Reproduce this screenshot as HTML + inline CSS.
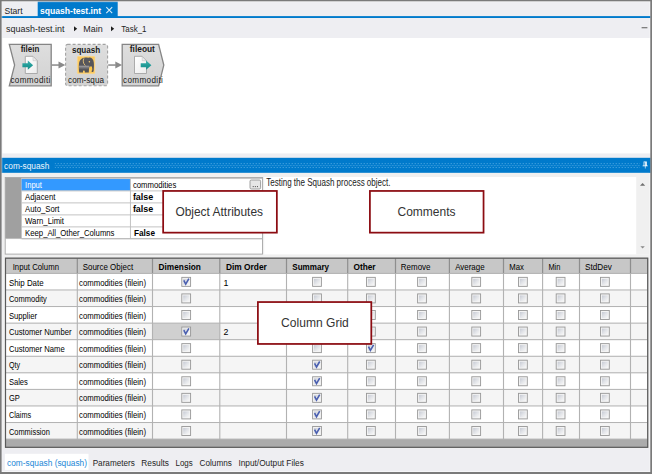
<!DOCTYPE html>
<html lang="en">
<head>
<meta charset="utf-8">
<title>squash-test.int</title>
<style>
html,body{margin:0;padding:0;background:#eeeef2;}
body{width:652px;height:474px;overflow:hidden;font-family:"Liberation Sans", sans-serif;}
svg{display:block;}
text{font-family:"Liberation Sans", sans-serif;white-space:pre;}
</style>
</head>
<body>
<svg width="652" height="474" viewBox="0 0 652 474" font-family='"Liberation Sans", sans-serif'>
<defs>
<linearGradient id="gbox" x1="0" y1="0" x2="0" y2="1"><stop offset="0" stop-color="#dedede"/><stop offset="1" stop-color="#d2d2d2"/></linearGradient>
<linearGradient id="gdoc" x1="0" y1="0" x2="1" y2="1"><stop offset="0" stop-color="#ffffff"/><stop offset="1" stop-color="#ececec"/></linearGradient>
<linearGradient id="geleph" x1="0" y1="0" x2="0" y2="1"><stop offset="0" stop-color="#a2a2a6"/><stop offset="0.5" stop-color="#707074"/><stop offset="1" stop-color="#4c4c50"/></linearGradient>
<linearGradient id="gteal" x1="0" y1="0" x2="0" y2="1"><stop offset="0" stop-color="#3fb1ad"/><stop offset="0.55" stop-color="#1f9a96"/><stop offset="1" stop-color="#1a8d8a"/></linearGradient>
<linearGradient id="gcb" x1="0" y1="0" x2="1" y2="1"><stop offset="0" stop-color="#c6cad4"/><stop offset="0.5" stop-color="#e2e4e8"/><stop offset="1" stop-color="#f8f8f8"/></linearGradient>
<pattern id="dots" x="54.7" y="163.1" width="3" height="4" patternUnits="userSpaceOnUse"><rect x="0" y="0" width="1" height="1" fill="#5eb0e6"/><rect x="1.5" y="2" width="1" height="1" fill="#5eb0e6"/></pattern>
</defs>
<rect x="0" y="0" width="652" height="474" fill="#eeeef2" />
<rect x="37.7" y="1.4" width="80" height="16" fill="#007acc" />
<rect x="1.4" y="16.1" width="649" height="1.9" fill="#007acc" />
<path d="M106.3 7.2 L112.2 13.2 M112.2 7.2 L106.3 13.2" stroke="#d6ebf8" stroke-width="1.1" fill="none"/>
<path d="M74 26.2 L77.2 28.7 L74 31.2 Z" fill="#1e1e1e"/>
<path d="M111 26.2 L114.2 28.7 L111 31.2 Z" fill="#1e1e1e"/>
<rect x="641.6" y="27.1" width="5.8" height="1.2" fill="#737373" />
<rect x="2.3" y="38" width="648.4" height="115.4" fill="#ffffff" />
<path d="M9.3 44.4 H51.2 V85.8 H9.3 L14.6 65.1 Z" fill="url(#gbox)" stroke="#858585" stroke-width="1.3" stroke-linejoin="miter"/>
<rect x="65.6" y="44.4" width="42" height="41.4" rx="2" fill="url(#gbox)" stroke="#a2a2a2" stroke-width="1.1" stroke-dasharray="3 2"/>
<path d="M122.2 44.4 H158.6 L163.8 65.1 L158.6 85.8 H122.2 Z" fill="url(#gbox)" stroke="#858585" stroke-width="1.3"/>
<rect x="51.8" y="64.3" width="7.2" height="1.5" fill="#8a8a8a" />
<path d="M58.5 61.6 L65.3 65.1 L58.5 68.6 Z" fill="#8a8a8a"/>
<rect x="108.2" y="64.3" width="7.6" height="1.5" fill="#8a8a8a" />
<path d="M115.3 61.6 L122.1 65.1 L115.3 68.6 Z" fill="#8a8a8a"/>
<path d="M25.3 56.3 H33 L37.3 60.7 V73.5 H25.3 Z" fill="url(#gdoc)" stroke="#a4a4a4" stroke-width="0.9"/>
<path d="M33 56.6 V60.7 H37.1 Z" fill="#ececec" stroke="#bcbcbc" stroke-width="0.5"/>
<path d="M22.4 63.2 H27.8 V60.6 L33.1 65.2 L27.8 69.8 V67.2 H22.4 Z" fill="url(#gteal)"/>
<path d="M134.5 56.3 H142.2 L146.5 60.7 V73.5 H134.5 Z" fill="url(#gdoc)" stroke="#a4a4a4" stroke-width="0.9"/>
<path d="M142.2 56.6 V60.7 H146.3 Z" fill="#ececec" stroke="#bcbcbc" stroke-width="0.5"/>
<path d="M140.7 63.2 H146.1 V60.6 L151.4 65.2 L146.1 69.8 V67.2 H140.7 Z" fill="url(#gteal)"/>
<rect x="77.3" y="56.3" width="17.6" height="17.4" rx="0.8" fill="#fbc95f" stroke="#fcdc96" stroke-width="0.6"/>
<path d="M79.2 72.6 C78.8 69 78.7 66 79 63.6 C79.5 60 82 57.8 85.4 57.6 C87 57.5 87.6 58 88.6 57.7 C91 57 93.4 59 93.8 62.4 C94.1 65 93.9 68.4 93.7 70.4 C93.6 71.8 92.6 72.4 91.7 71.8 L91.5 70.9 C92.2 70.8 92.3 70 92.2 68.6 L91.9 66.6 L89.5 66.6 C88.9 68.5 88.8 70.6 88.8 72.6 H84.8 V70.9 C84.6 70 83.2 70 83 70.9 V72.6 Z" fill="#56565b"/>
<path d="M79 65.8 H89.3 C88.9 67.6 88.8 69 88.8 70.2 H79 Z" fill="url(#geleph)"/>
<path d="M83.9 58.4 C82.9 60.4 82.9 63.4 85.3 65.5" stroke="#f6cf7c" stroke-width="0.8" fill="none"/>
<circle cx="89.4" cy="61.8" r="0.75" fill="#f7cf6e"/>
<path d="M89.7 66.9 H91.5 L91.8 70.2 C91 70.4 90.2 69 89.7 66.9 Z" fill="#fdc43c"/>
<rect x="1.4" y="157.8" width="649.2" height="15.1" fill="#007acc" />
<rect x="54.7" y="163.1" width="585.3" height="5" fill="url(#dots)" />
<path d="M643.6 161.5 H646.8 V165.4 H647.7 V166.2 H645.5 V168.6 H644.9 V166.2 H642.6 V165.4 H643.6 Z M644.4 162.2 V165.4 H645.2 V162.2 Z" fill="#ffffff" fill-rule="evenodd"/>
<rect x="2.3" y="172.9" width="647.3" height="275.5" fill="#f0f0f0" />
<rect x="5.2" y="177.5" width="257.3" height="76.6" fill="#ffffff" stroke="#a6a6a6" stroke-width="0.9"/>
<rect x="5.3" y="177.8" width="16.3" height="60.6" fill="#a0a0a0" />
<rect x="21.6" y="179" width="108.7" height="11.6" fill="#3399ff" />
<rect x="21.6" y="178.15" width="240.6" height="0.9" fill="#bdbdbd" />
<rect x="21.6" y="190.45" width="240.6" height="0.9" fill="#bdbdbd" />
<rect x="21.6" y="202.45" width="240.6" height="0.9" fill="#bdbdbd" />
<rect x="21.6" y="214.45" width="240.6" height="0.9" fill="#bdbdbd" />
<rect x="21.6" y="226.45" width="240.6" height="0.9" fill="#bdbdbd" />
<rect x="21.6" y="238.45" width="240.6" height="0.9" fill="#bdbdbd" />
<rect x="129.95" y="178.6" width="0.9" height="60" fill="#bdbdbd" />
<rect x="5.3" y="238.15" width="256.9" height="0.9" fill="#b8b8b8" />
<rect x="250" y="180" width="10.6" height="9" rx="1.3" fill="#e6e6e6" stroke="#8a8a8a" stroke-width="0.8"/>
<rect x="252.75" y="186.2" width="0.9" height="0.9" fill="#222" />
<rect x="254.85" y="186.2" width="0.9" height="0.9" fill="#222" />
<rect x="256.95" y="186.2" width="0.9" height="0.9" fill="#222" />
<rect x="264.2" y="177" width="385.3" height="77.4" fill="#ffffff" />
<rect x="636.2" y="177" width="13.4" height="77.4" fill="#f0f0f0" />
<path d="M640 185.8 L642.6 183 L645.2 185.8 Z" fill="#707070"/>
<path d="M640.4 246.2 L642.6 248.4 L644.8 246.2 Z" fill="#8a8a8a"/>
<rect x="5" y="257.7" width="643.2" height="190.1" fill="#ababab" />
<rect x="5.6" y="258.3" width="642" height="15.1" fill="#c7c7c7" />
<rect x="5.6" y="273.4" width="642" height="16.57" fill="#ffffff" />
<rect x="5.6" y="289.97" width="642" height="16.57" fill="#f5f5f5" />
<rect x="5.6" y="306.54" width="642" height="16.57" fill="#ffffff" />
<rect x="5.6" y="323.11" width="642" height="16.57" fill="#f5f5f5" />
<rect x="5.6" y="339.68" width="642" height="16.57" fill="#ffffff" />
<rect x="5.6" y="356.25" width="642" height="16.57" fill="#f5f5f5" />
<rect x="5.6" y="372.82" width="642" height="16.57" fill="#ffffff" />
<rect x="5.6" y="389.39" width="642" height="16.57" fill="#f5f5f5" />
<rect x="5.6" y="405.96" width="642" height="16.57" fill="#ffffff" />
<rect x="5.6" y="422.53" width="642" height="16.57" fill="#f5f5f5" />
<rect x="152.5" y="323.11" width="67.3" height="16.57" fill="#d0d0d0" />
<rect x="5.6" y="272.9" width="642" height="1" fill="#b2b2b2" />
<rect x="5.6" y="289.47" width="642" height="1" fill="#b2b2b2" />
<rect x="5.6" y="306.04" width="642" height="1" fill="#b2b2b2" />
<rect x="5.6" y="322.61" width="642" height="1" fill="#b2b2b2" />
<rect x="5.6" y="339.18" width="642" height="1" fill="#b2b2b2" />
<rect x="5.6" y="355.75" width="642" height="1" fill="#b2b2b2" />
<rect x="5.6" y="372.32" width="642" height="1" fill="#b2b2b2" />
<rect x="5.6" y="388.89" width="642" height="1" fill="#b2b2b2" />
<rect x="5.6" y="405.46" width="642" height="1" fill="#b2b2b2" />
<rect x="5.6" y="422.03" width="642" height="1" fill="#b2b2b2" />
<rect x="5.6" y="438.6" width="642" height="1" fill="#b2b2b2" />
<rect x="76.7" y="258.3" width="1.2" height="15.1" fill="#8e8e8e" />
<rect x="76.75" y="273.4" width="1.1" height="165.7" fill="#b2b2b2" />
<rect x="151.9" y="258.3" width="1.2" height="15.1" fill="#8e8e8e" />
<rect x="151.95" y="273.4" width="1.1" height="165.7" fill="#b2b2b2" />
<rect x="219.2" y="258.3" width="1.2" height="15.1" fill="#8e8e8e" />
<rect x="219.25" y="273.4" width="1.1" height="165.7" fill="#b2b2b2" />
<rect x="285.9" y="258.3" width="1.2" height="15.1" fill="#8e8e8e" />
<rect x="285.95" y="273.4" width="1.1" height="165.7" fill="#b2b2b2" />
<rect x="347.1" y="258.3" width="1.2" height="15.1" fill="#8e8e8e" />
<rect x="347.15" y="273.4" width="1.1" height="165.7" fill="#b2b2b2" />
<rect x="394.9" y="258.3" width="1.2" height="15.1" fill="#8e8e8e" />
<rect x="394.95" y="273.4" width="1.1" height="165.7" fill="#b2b2b2" />
<rect x="448.8" y="258.3" width="1.2" height="15.1" fill="#8e8e8e" />
<rect x="448.85" y="273.4" width="1.1" height="165.7" fill="#b2b2b2" />
<rect x="502.9" y="258.3" width="1.2" height="15.1" fill="#8e8e8e" />
<rect x="502.95" y="273.4" width="1.1" height="165.7" fill="#b2b2b2" />
<rect x="542" y="258.3" width="1.2" height="15.1" fill="#8e8e8e" />
<rect x="542.05" y="273.4" width="1.1" height="165.7" fill="#b2b2b2" />
<rect x="578.9" y="258.3" width="1.2" height="15.1" fill="#8e8e8e" />
<rect x="578.95" y="273.4" width="1.1" height="165.7" fill="#b2b2b2" />
<rect x="629.9" y="258.3" width="1.2" height="15.1" fill="#8e8e8e" />
<rect x="629.95" y="273.4" width="1.1" height="165.7" fill="#b2b2b2" />
<rect x="5.5" y="258.2" width="642.2" height="189.1" fill="none" stroke="#5a5a5a" stroke-width="1.2"/>
<rect x="181.8" y="277.35" width="8.8" height="9" fill="#f4f4f4" stroke="#979797" stroke-width="0.9"/>
<rect x="183.2" y="278.85" width="6" height="6" fill="url(#gcb)"/>
<path d="M183.8 280.45 L185.7 284.15 L188.9 278.65" fill="none" stroke="#4a5fb0" stroke-width="1.6"/>
<rect x="312.6" y="277.35" width="8.8" height="9" fill="#f4f4f4" stroke="#979797" stroke-width="0.9"/>
<rect x="314" y="278.85" width="6" height="6" fill="url(#gcb)"/>
<rect x="366.5" y="277.35" width="8.8" height="9" fill="#f4f4f4" stroke="#979797" stroke-width="0.9"/>
<rect x="367.9" y="278.85" width="6" height="6" fill="url(#gcb)"/>
<rect x="417.6" y="277.35" width="8.8" height="9" fill="#f4f4f4" stroke="#979797" stroke-width="0.9"/>
<rect x="419" y="278.85" width="6" height="6" fill="url(#gcb)"/>
<rect x="471.8" y="277.35" width="8.8" height="9" fill="#f4f4f4" stroke="#979797" stroke-width="0.9"/>
<rect x="473.2" y="278.85" width="6" height="6" fill="url(#gcb)"/>
<rect x="518.5" y="277.35" width="8.8" height="9" fill="#f4f4f4" stroke="#979797" stroke-width="0.9"/>
<rect x="519.9" y="278.85" width="6" height="6" fill="url(#gcb)"/>
<rect x="556.2" y="277.35" width="8.8" height="9" fill="#f4f4f4" stroke="#979797" stroke-width="0.9"/>
<rect x="557.6" y="278.85" width="6" height="6" fill="url(#gcb)"/>
<rect x="600.5" y="277.35" width="8.8" height="9" fill="#f4f4f4" stroke="#979797" stroke-width="0.9"/>
<rect x="601.9" y="278.85" width="6" height="6" fill="url(#gcb)"/>
<rect x="181.8" y="293.92" width="8.8" height="9" fill="#f4f4f4" stroke="#979797" stroke-width="0.9"/>
<rect x="183.2" y="295.42" width="6" height="6" fill="url(#gcb)"/>
<rect x="312.6" y="293.92" width="8.8" height="9" fill="#f4f4f4" stroke="#979797" stroke-width="0.9"/>
<rect x="314" y="295.42" width="6" height="6" fill="url(#gcb)"/>
<rect x="366.5" y="293.92" width="8.8" height="9" fill="#f4f4f4" stroke="#979797" stroke-width="0.9"/>
<rect x="367.9" y="295.42" width="6" height="6" fill="url(#gcb)"/>
<rect x="417.6" y="293.92" width="8.8" height="9" fill="#f4f4f4" stroke="#979797" stroke-width="0.9"/>
<rect x="419" y="295.42" width="6" height="6" fill="url(#gcb)"/>
<rect x="471.8" y="293.92" width="8.8" height="9" fill="#f4f4f4" stroke="#979797" stroke-width="0.9"/>
<rect x="473.2" y="295.42" width="6" height="6" fill="url(#gcb)"/>
<rect x="518.5" y="293.92" width="8.8" height="9" fill="#f4f4f4" stroke="#979797" stroke-width="0.9"/>
<rect x="519.9" y="295.42" width="6" height="6" fill="url(#gcb)"/>
<rect x="556.2" y="293.92" width="8.8" height="9" fill="#f4f4f4" stroke="#979797" stroke-width="0.9"/>
<rect x="557.6" y="295.42" width="6" height="6" fill="url(#gcb)"/>
<rect x="600.5" y="293.92" width="8.8" height="9" fill="#f4f4f4" stroke="#979797" stroke-width="0.9"/>
<rect x="601.9" y="295.42" width="6" height="6" fill="url(#gcb)"/>
<rect x="181.8" y="310.49" width="8.8" height="9" fill="#f4f4f4" stroke="#979797" stroke-width="0.9"/>
<rect x="183.2" y="311.99" width="6" height="6" fill="url(#gcb)"/>
<rect x="312.6" y="310.49" width="8.8" height="9" fill="#f4f4f4" stroke="#979797" stroke-width="0.9"/>
<rect x="314" y="311.99" width="6" height="6" fill="url(#gcb)"/>
<rect x="366.5" y="310.49" width="8.8" height="9" fill="#f4f4f4" stroke="#979797" stroke-width="0.9"/>
<rect x="367.9" y="311.99" width="6" height="6" fill="url(#gcb)"/>
<rect x="417.6" y="310.49" width="8.8" height="9" fill="#f4f4f4" stroke="#979797" stroke-width="0.9"/>
<rect x="419" y="311.99" width="6" height="6" fill="url(#gcb)"/>
<rect x="471.8" y="310.49" width="8.8" height="9" fill="#f4f4f4" stroke="#979797" stroke-width="0.9"/>
<rect x="473.2" y="311.99" width="6" height="6" fill="url(#gcb)"/>
<rect x="518.5" y="310.49" width="8.8" height="9" fill="#f4f4f4" stroke="#979797" stroke-width="0.9"/>
<rect x="519.9" y="311.99" width="6" height="6" fill="url(#gcb)"/>
<rect x="556.2" y="310.49" width="8.8" height="9" fill="#f4f4f4" stroke="#979797" stroke-width="0.9"/>
<rect x="557.6" y="311.99" width="6" height="6" fill="url(#gcb)"/>
<rect x="600.5" y="310.49" width="8.8" height="9" fill="#f4f4f4" stroke="#979797" stroke-width="0.9"/>
<rect x="601.9" y="311.99" width="6" height="6" fill="url(#gcb)"/>
<rect x="181.8" y="327.06" width="8.8" height="9" fill="#f4f4f4" stroke="#979797" stroke-width="0.9"/>
<rect x="183.2" y="328.56" width="6" height="6" fill="url(#gcb)"/>
<path d="M183.8 330.16 L185.7 333.86 L188.9 328.36" fill="none" stroke="#4a5fb0" stroke-width="1.6"/>
<rect x="312.6" y="327.06" width="8.8" height="9" fill="#f4f4f4" stroke="#979797" stroke-width="0.9"/>
<rect x="314" y="328.56" width="6" height="6" fill="url(#gcb)"/>
<rect x="366.5" y="327.06" width="8.8" height="9" fill="#f4f4f4" stroke="#979797" stroke-width="0.9"/>
<rect x="367.9" y="328.56" width="6" height="6" fill="url(#gcb)"/>
<rect x="417.6" y="327.06" width="8.8" height="9" fill="#f4f4f4" stroke="#979797" stroke-width="0.9"/>
<rect x="419" y="328.56" width="6" height="6" fill="url(#gcb)"/>
<rect x="471.8" y="327.06" width="8.8" height="9" fill="#f4f4f4" stroke="#979797" stroke-width="0.9"/>
<rect x="473.2" y="328.56" width="6" height="6" fill="url(#gcb)"/>
<rect x="518.5" y="327.06" width="8.8" height="9" fill="#f4f4f4" stroke="#979797" stroke-width="0.9"/>
<rect x="519.9" y="328.56" width="6" height="6" fill="url(#gcb)"/>
<rect x="556.2" y="327.06" width="8.8" height="9" fill="#f4f4f4" stroke="#979797" stroke-width="0.9"/>
<rect x="557.6" y="328.56" width="6" height="6" fill="url(#gcb)"/>
<rect x="600.5" y="327.06" width="8.8" height="9" fill="#f4f4f4" stroke="#979797" stroke-width="0.9"/>
<rect x="601.9" y="328.56" width="6" height="6" fill="url(#gcb)"/>
<rect x="181.8" y="343.63" width="8.8" height="9" fill="#f4f4f4" stroke="#979797" stroke-width="0.9"/>
<rect x="183.2" y="345.13" width="6" height="6" fill="url(#gcb)"/>
<rect x="312.6" y="343.63" width="8.8" height="9" fill="#f4f4f4" stroke="#979797" stroke-width="0.9"/>
<rect x="314" y="345.13" width="6" height="6" fill="url(#gcb)"/>
<rect x="366.5" y="343.63" width="8.8" height="9" fill="#f4f4f4" stroke="#979797" stroke-width="0.9"/>
<rect x="367.9" y="345.13" width="6" height="6" fill="url(#gcb)"/>
<path d="M368.5 346.73 L370.4 350.43 L373.6 344.93" fill="none" stroke="#4a5fb0" stroke-width="1.6"/>
<rect x="417.6" y="343.63" width="8.8" height="9" fill="#f4f4f4" stroke="#979797" stroke-width="0.9"/>
<rect x="419" y="345.13" width="6" height="6" fill="url(#gcb)"/>
<rect x="471.8" y="343.63" width="8.8" height="9" fill="#f4f4f4" stroke="#979797" stroke-width="0.9"/>
<rect x="473.2" y="345.13" width="6" height="6" fill="url(#gcb)"/>
<rect x="518.5" y="343.63" width="8.8" height="9" fill="#f4f4f4" stroke="#979797" stroke-width="0.9"/>
<rect x="519.9" y="345.13" width="6" height="6" fill="url(#gcb)"/>
<rect x="556.2" y="343.63" width="8.8" height="9" fill="#f4f4f4" stroke="#979797" stroke-width="0.9"/>
<rect x="557.6" y="345.13" width="6" height="6" fill="url(#gcb)"/>
<rect x="600.5" y="343.63" width="8.8" height="9" fill="#f4f4f4" stroke="#979797" stroke-width="0.9"/>
<rect x="601.9" y="345.13" width="6" height="6" fill="url(#gcb)"/>
<rect x="181.8" y="360.2" width="8.8" height="9" fill="#f4f4f4" stroke="#979797" stroke-width="0.9"/>
<rect x="183.2" y="361.7" width="6" height="6" fill="url(#gcb)"/>
<rect x="312.6" y="360.2" width="8.8" height="9" fill="#f4f4f4" stroke="#979797" stroke-width="0.9"/>
<rect x="314" y="361.7" width="6" height="6" fill="url(#gcb)"/>
<path d="M314.6 363.3 L316.5 367 L319.7 361.5" fill="none" stroke="#4a5fb0" stroke-width="1.6"/>
<rect x="366.5" y="360.2" width="8.8" height="9" fill="#f4f4f4" stroke="#979797" stroke-width="0.9"/>
<rect x="367.9" y="361.7" width="6" height="6" fill="url(#gcb)"/>
<rect x="417.6" y="360.2" width="8.8" height="9" fill="#f4f4f4" stroke="#979797" stroke-width="0.9"/>
<rect x="419" y="361.7" width="6" height="6" fill="url(#gcb)"/>
<rect x="471.8" y="360.2" width="8.8" height="9" fill="#f4f4f4" stroke="#979797" stroke-width="0.9"/>
<rect x="473.2" y="361.7" width="6" height="6" fill="url(#gcb)"/>
<rect x="518.5" y="360.2" width="8.8" height="9" fill="#f4f4f4" stroke="#979797" stroke-width="0.9"/>
<rect x="519.9" y="361.7" width="6" height="6" fill="url(#gcb)"/>
<rect x="556.2" y="360.2" width="8.8" height="9" fill="#f4f4f4" stroke="#979797" stroke-width="0.9"/>
<rect x="557.6" y="361.7" width="6" height="6" fill="url(#gcb)"/>
<rect x="600.5" y="360.2" width="8.8" height="9" fill="#f4f4f4" stroke="#979797" stroke-width="0.9"/>
<rect x="601.9" y="361.7" width="6" height="6" fill="url(#gcb)"/>
<rect x="181.8" y="376.77" width="8.8" height="9" fill="#f4f4f4" stroke="#979797" stroke-width="0.9"/>
<rect x="183.2" y="378.27" width="6" height="6" fill="url(#gcb)"/>
<rect x="312.6" y="376.77" width="8.8" height="9" fill="#f4f4f4" stroke="#979797" stroke-width="0.9"/>
<rect x="314" y="378.27" width="6" height="6" fill="url(#gcb)"/>
<path d="M314.6 379.87 L316.5 383.57 L319.7 378.07" fill="none" stroke="#4a5fb0" stroke-width="1.6"/>
<rect x="366.5" y="376.77" width="8.8" height="9" fill="#f4f4f4" stroke="#979797" stroke-width="0.9"/>
<rect x="367.9" y="378.27" width="6" height="6" fill="url(#gcb)"/>
<rect x="417.6" y="376.77" width="8.8" height="9" fill="#f4f4f4" stroke="#979797" stroke-width="0.9"/>
<rect x="419" y="378.27" width="6" height="6" fill="url(#gcb)"/>
<rect x="471.8" y="376.77" width="8.8" height="9" fill="#f4f4f4" stroke="#979797" stroke-width="0.9"/>
<rect x="473.2" y="378.27" width="6" height="6" fill="url(#gcb)"/>
<rect x="518.5" y="376.77" width="8.8" height="9" fill="#f4f4f4" stroke="#979797" stroke-width="0.9"/>
<rect x="519.9" y="378.27" width="6" height="6" fill="url(#gcb)"/>
<rect x="556.2" y="376.77" width="8.8" height="9" fill="#f4f4f4" stroke="#979797" stroke-width="0.9"/>
<rect x="557.6" y="378.27" width="6" height="6" fill="url(#gcb)"/>
<rect x="600.5" y="376.77" width="8.8" height="9" fill="#f4f4f4" stroke="#979797" stroke-width="0.9"/>
<rect x="601.9" y="378.27" width="6" height="6" fill="url(#gcb)"/>
<rect x="181.8" y="393.34" width="8.8" height="9" fill="#f4f4f4" stroke="#979797" stroke-width="0.9"/>
<rect x="183.2" y="394.84" width="6" height="6" fill="url(#gcb)"/>
<rect x="312.6" y="393.34" width="8.8" height="9" fill="#f4f4f4" stroke="#979797" stroke-width="0.9"/>
<rect x="314" y="394.84" width="6" height="6" fill="url(#gcb)"/>
<path d="M314.6 396.44 L316.5 400.14 L319.7 394.64" fill="none" stroke="#4a5fb0" stroke-width="1.6"/>
<rect x="366.5" y="393.34" width="8.8" height="9" fill="#f4f4f4" stroke="#979797" stroke-width="0.9"/>
<rect x="367.9" y="394.84" width="6" height="6" fill="url(#gcb)"/>
<rect x="417.6" y="393.34" width="8.8" height="9" fill="#f4f4f4" stroke="#979797" stroke-width="0.9"/>
<rect x="419" y="394.84" width="6" height="6" fill="url(#gcb)"/>
<rect x="471.8" y="393.34" width="8.8" height="9" fill="#f4f4f4" stroke="#979797" stroke-width="0.9"/>
<rect x="473.2" y="394.84" width="6" height="6" fill="url(#gcb)"/>
<rect x="518.5" y="393.34" width="8.8" height="9" fill="#f4f4f4" stroke="#979797" stroke-width="0.9"/>
<rect x="519.9" y="394.84" width="6" height="6" fill="url(#gcb)"/>
<rect x="556.2" y="393.34" width="8.8" height="9" fill="#f4f4f4" stroke="#979797" stroke-width="0.9"/>
<rect x="557.6" y="394.84" width="6" height="6" fill="url(#gcb)"/>
<rect x="600.5" y="393.34" width="8.8" height="9" fill="#f4f4f4" stroke="#979797" stroke-width="0.9"/>
<rect x="601.9" y="394.84" width="6" height="6" fill="url(#gcb)"/>
<rect x="181.8" y="409.91" width="8.8" height="9" fill="#f4f4f4" stroke="#979797" stroke-width="0.9"/>
<rect x="183.2" y="411.41" width="6" height="6" fill="url(#gcb)"/>
<rect x="312.6" y="409.91" width="8.8" height="9" fill="#f4f4f4" stroke="#979797" stroke-width="0.9"/>
<rect x="314" y="411.41" width="6" height="6" fill="url(#gcb)"/>
<path d="M314.6 413.01 L316.5 416.71 L319.7 411.21" fill="none" stroke="#4a5fb0" stroke-width="1.6"/>
<rect x="366.5" y="409.91" width="8.8" height="9" fill="#f4f4f4" stroke="#979797" stroke-width="0.9"/>
<rect x="367.9" y="411.41" width="6" height="6" fill="url(#gcb)"/>
<rect x="417.6" y="409.91" width="8.8" height="9" fill="#f4f4f4" stroke="#979797" stroke-width="0.9"/>
<rect x="419" y="411.41" width="6" height="6" fill="url(#gcb)"/>
<rect x="471.8" y="409.91" width="8.8" height="9" fill="#f4f4f4" stroke="#979797" stroke-width="0.9"/>
<rect x="473.2" y="411.41" width="6" height="6" fill="url(#gcb)"/>
<rect x="518.5" y="409.91" width="8.8" height="9" fill="#f4f4f4" stroke="#979797" stroke-width="0.9"/>
<rect x="519.9" y="411.41" width="6" height="6" fill="url(#gcb)"/>
<rect x="556.2" y="409.91" width="8.8" height="9" fill="#f4f4f4" stroke="#979797" stroke-width="0.9"/>
<rect x="557.6" y="411.41" width="6" height="6" fill="url(#gcb)"/>
<rect x="600.5" y="409.91" width="8.8" height="9" fill="#f4f4f4" stroke="#979797" stroke-width="0.9"/>
<rect x="601.9" y="411.41" width="6" height="6" fill="url(#gcb)"/>
<rect x="181.8" y="426.48" width="8.8" height="9" fill="#f4f4f4" stroke="#979797" stroke-width="0.9"/>
<rect x="183.2" y="427.98" width="6" height="6" fill="url(#gcb)"/>
<rect x="312.6" y="426.48" width="8.8" height="9" fill="#f4f4f4" stroke="#979797" stroke-width="0.9"/>
<rect x="314" y="427.98" width="6" height="6" fill="url(#gcb)"/>
<path d="M314.6 429.58 L316.5 433.28 L319.7 427.78" fill="none" stroke="#4a5fb0" stroke-width="1.6"/>
<rect x="366.5" y="426.48" width="8.8" height="9" fill="#f4f4f4" stroke="#979797" stroke-width="0.9"/>
<rect x="367.9" y="427.98" width="6" height="6" fill="url(#gcb)"/>
<rect x="417.6" y="426.48" width="8.8" height="9" fill="#f4f4f4" stroke="#979797" stroke-width="0.9"/>
<rect x="419" y="427.98" width="6" height="6" fill="url(#gcb)"/>
<rect x="471.8" y="426.48" width="8.8" height="9" fill="#f4f4f4" stroke="#979797" stroke-width="0.9"/>
<rect x="473.2" y="427.98" width="6" height="6" fill="url(#gcb)"/>
<rect x="518.5" y="426.48" width="8.8" height="9" fill="#f4f4f4" stroke="#979797" stroke-width="0.9"/>
<rect x="519.9" y="427.98" width="6" height="6" fill="url(#gcb)"/>
<rect x="556.2" y="426.48" width="8.8" height="9" fill="#f4f4f4" stroke="#979797" stroke-width="0.9"/>
<rect x="557.6" y="427.98" width="6" height="6" fill="url(#gcb)"/>
<rect x="600.5" y="426.48" width="8.8" height="9" fill="#f4f4f4" stroke="#979797" stroke-width="0.9"/>
<rect x="601.9" y="427.98" width="6" height="6" fill="url(#gcb)"/>
<rect x="4.9" y="453.8" width="83.6" height="16.1" fill="#ffffff" />
<text x="4.5" y="13.5" font-size="9.6" fill="#1e1e1e" font-weight="normal" textLength="18.1" lengthAdjust="spacingAndGlyphs" >Start</text>
<text x="40" y="13.5" font-size="9.6" fill="#ffffff" font-weight="bold" textLength="61.1" lengthAdjust="spacingAndGlyphs" >squash-test.int</text>
<text x="6.1" y="32.1" font-size="9.5" fill="#1e1e1e" font-weight="normal" textLength="58.3" lengthAdjust="spacingAndGlyphs" >squash-test.int</text>
<text x="83.3" y="32.1" font-size="9.5" fill="#1e1e1e" font-weight="normal" textLength="19.4" lengthAdjust="spacingAndGlyphs" >Main</text>
<text x="121.3" y="32.1" font-size="9.5" fill="#1e1e1e" font-weight="normal" textLength="25.2" lengthAdjust="spacingAndGlyphs" >Task_1</text>
<text x="20.7" y="52.4" font-size="8.3" fill="#1a1a1a" font-weight="bold" textLength="18.6" lengthAdjust="spacingAndGlyphs" >filein</text>
<text x="10.4" y="83.3" font-size="8.15" fill="#1a1a1a" font-weight="normal" textLength="40" lengthAdjust="spacing" >commoditi</text>
<text x="71.9" y="52.6" font-size="8.3" fill="#1a1a1a" font-weight="bold" textLength="28.4" lengthAdjust="spacingAndGlyphs" >squash</text>
<text x="68.1" y="83.3" font-size="8.15" fill="#1a1a1a" font-weight="normal" textLength="35.9" lengthAdjust="spacing" >com-squa</text>
<text x="129.8" y="52.4" font-size="8.3" fill="#1a1a1a" font-weight="bold" textLength="25.1" lengthAdjust="spacingAndGlyphs" >fileout</text>
<text x="123.1" y="83.3" font-size="8.15" fill="#1a1a1a" font-weight="normal" textLength="39.8" lengthAdjust="spacing" >commoditi</text>
<text x="4.1" y="168.6" font-size="8.9" fill="#eef6fc" font-weight="normal" textLength="45.3" lengthAdjust="spacingAndGlyphs" >com-squash</text>
<text x="25.1" y="187.6" font-size="9.9" fill="#ffffff" font-weight="normal" textLength="16.8" lengthAdjust="spacingAndGlyphs" >Input</text>
<text x="25.1" y="199.6" font-size="9.9" fill="#000" font-weight="normal" textLength="30.3" lengthAdjust="spacingAndGlyphs" >Adjacent</text>
<text x="25.1" y="211.6" font-size="9.9" fill="#000" font-weight="normal" textLength="34.4" lengthAdjust="spacingAndGlyphs" >Auto_Sort</text>
<text x="25.1" y="223.6" font-size="9.9" fill="#000" font-weight="normal" textLength="38.9" lengthAdjust="spacingAndGlyphs" >Warn_Limit</text>
<text x="25.1" y="235.6" font-size="9.9" fill="#000" font-weight="normal" textLength="89.4" lengthAdjust="spacingAndGlyphs" >Keep_All_Other_Columns</text>
<text x="132.9" y="187.6" font-size="9.9" fill="#000" font-weight="normal" textLength="43.4" lengthAdjust="spacingAndGlyphs" >commodities</text>
<text x="132.9" y="199.6" font-size="9.9" fill="#000" font-weight="bold" textLength="20.4" lengthAdjust="spacingAndGlyphs" >false</text>
<text x="132.9" y="211.6" font-size="9.9" fill="#000" font-weight="bold" textLength="20.4" lengthAdjust="spacingAndGlyphs" >false</text>
<text x="134" y="235.6" font-size="9.9" fill="#000" font-weight="bold" textLength="21" lengthAdjust="spacingAndGlyphs" >False</text>
<text x="266.2" y="185.8" font-size="10.5" fill="#1a1a1a" font-weight="normal" textLength="124.3" lengthAdjust="spacingAndGlyphs" >Testing the Squash process object.</text>
<text x="12.7" y="269.9" font-size="9.8" fill="#000" font-weight="normal" textLength="46.3" lengthAdjust="spacingAndGlyphs" >Input Column</text>
<text x="82.7" y="269.9" font-size="9.8" fill="#000" font-weight="normal" textLength="50.4" lengthAdjust="spacingAndGlyphs" >Source Object</text>
<text x="158.6" y="269.9" font-size="9.8" fill="#000" font-weight="bold" textLength="42.3" lengthAdjust="spacingAndGlyphs" >Dimension</text>
<text x="226" y="269.9" font-size="9.8" fill="#000" font-weight="bold" textLength="40.8" lengthAdjust="spacingAndGlyphs" >Dim Order</text>
<text x="292.3" y="269.9" font-size="9.8" fill="#000" font-weight="bold" textLength="36.7" lengthAdjust="spacingAndGlyphs" >Summary</text>
<text x="353.5" y="269.9" font-size="9.8" fill="#000" font-weight="bold" textLength="22.1" lengthAdjust="spacingAndGlyphs" >Other</text>
<text x="400.8" y="269.9" font-size="9.8" fill="#000" font-weight="normal" textLength="29.7" lengthAdjust="spacingAndGlyphs" >Remove</text>
<text x="455.2" y="269.9" font-size="9.8" fill="#000" font-weight="normal" textLength="29.4" lengthAdjust="spacingAndGlyphs" >Average</text>
<text x="509.3" y="269.9" font-size="9.8" fill="#000" font-weight="normal" textLength="14.6" lengthAdjust="spacingAndGlyphs" >Max</text>
<text x="548.4" y="269.9" font-size="9.8" fill="#000" font-weight="normal" textLength="12" lengthAdjust="spacingAndGlyphs" >Min</text>
<text x="585.1" y="269.9" font-size="9.8" fill="#000" font-weight="normal" textLength="26.7" lengthAdjust="spacingAndGlyphs" >StdDev</text>
<text x="8.9" y="285.5" font-size="9.8" fill="#000" font-weight="normal" textLength="34.7" lengthAdjust="spacingAndGlyphs" >Ship Date</text>
<text x="79" y="285.5" font-size="9.8" fill="#000" font-weight="normal" textLength="67" lengthAdjust="spacingAndGlyphs" >commodities (filein)</text>
<text x="8.9" y="302.07" font-size="9.8" fill="#000" font-weight="normal" textLength="37.9" lengthAdjust="spacingAndGlyphs" >Commodity</text>
<text x="79" y="302.07" font-size="9.8" fill="#000" font-weight="normal" textLength="67" lengthAdjust="spacingAndGlyphs" >commodities (filein)</text>
<text x="8.9" y="318.64" font-size="9.8" fill="#000" font-weight="normal" textLength="28.2" lengthAdjust="spacingAndGlyphs" >Supplier</text>
<text x="79" y="318.64" font-size="9.8" fill="#000" font-weight="normal" textLength="67" lengthAdjust="spacingAndGlyphs" >commodities (filein)</text>
<text x="8.9" y="335.21" font-size="9.8" fill="#000" font-weight="normal" textLength="62.6" lengthAdjust="spacingAndGlyphs" >Customer Number</text>
<text x="79" y="335.21" font-size="9.8" fill="#000" font-weight="normal" textLength="67" lengthAdjust="spacingAndGlyphs" >commodities (filein)</text>
<text x="8.9" y="351.78" font-size="9.8" fill="#000" font-weight="normal" textLength="55.8" lengthAdjust="spacingAndGlyphs" >Customer Name</text>
<text x="79" y="351.78" font-size="9.8" fill="#000" font-weight="normal" textLength="67" lengthAdjust="spacingAndGlyphs" >commodities (filein)</text>
<text x="8.9" y="368.35" font-size="9.8" fill="#000" font-weight="normal" textLength="11.1" lengthAdjust="spacingAndGlyphs" >Qty</text>
<text x="79" y="368.35" font-size="9.8" fill="#000" font-weight="normal" textLength="67" lengthAdjust="spacingAndGlyphs" >commodities (filein)</text>
<text x="8.9" y="384.92" font-size="9.8" fill="#000" font-weight="normal" textLength="19" lengthAdjust="spacingAndGlyphs" >Sales</text>
<text x="79" y="384.92" font-size="9.8" fill="#000" font-weight="normal" textLength="67" lengthAdjust="spacingAndGlyphs" >commodities (filein)</text>
<text x="8.9" y="401.49" font-size="9.8" fill="#000" font-weight="normal" textLength="10.9" lengthAdjust="spacingAndGlyphs" >GP</text>
<text x="79" y="401.49" font-size="9.8" fill="#000" font-weight="normal" textLength="67" lengthAdjust="spacingAndGlyphs" >commodities (filein)</text>
<text x="8.9" y="418.06" font-size="9.8" fill="#000" font-weight="normal" textLength="22.2" lengthAdjust="spacingAndGlyphs" >Claims</text>
<text x="79" y="418.06" font-size="9.8" fill="#000" font-weight="normal" textLength="67" lengthAdjust="spacingAndGlyphs" >commodities (filein)</text>
<text x="8.9" y="434.63" font-size="9.8" fill="#000" font-weight="normal" textLength="40.9" lengthAdjust="spacingAndGlyphs" >Commission</text>
<text x="79" y="434.63" font-size="9.8" fill="#000" font-weight="normal" textLength="67" lengthAdjust="spacingAndGlyphs" >commodities (filein)</text>
<g transform="translate(223.4 285.5) scale(0.9 1)"><text x="0" y="0" font-size="9.8" fill="#000" font-weight="normal" text-anchor="start" >1</text></g>
<g transform="translate(223.4 335.21) scale(0.9 1)"><text x="0" y="0" font-size="9.8" fill="#000" font-weight="normal" text-anchor="start" >2</text></g>
<text x="7.1" y="465.6" font-size="9.6" fill="#1b87d6" font-weight="normal" textLength="79.9" lengthAdjust="spacingAndGlyphs" >com-squash (squash)</text>
<text x="92.7" y="465.6" font-size="9.6" fill="#1e1e1e" font-weight="normal" textLength="42.1" lengthAdjust="spacingAndGlyphs" >Parameters</text>
<text x="141.3" y="465.6" font-size="9.6" fill="#1e1e1e" font-weight="normal" textLength="27.7" lengthAdjust="spacingAndGlyphs" >Results</text>
<text x="175.5" y="465.6" font-size="9.6" fill="#1e1e1e" font-weight="normal" textLength="17.2" lengthAdjust="spacingAndGlyphs" >Logs</text>
<text x="199.6" y="465.6" font-size="9.6" fill="#1e1e1e" font-weight="normal" textLength="32.2" lengthAdjust="spacingAndGlyphs" >Columns</text>
<text x="238.4" y="465.6" font-size="9.6" fill="#1e1e1e" font-weight="normal" textLength="65.5" lengthAdjust="spacingAndGlyphs" >Input/Output Files</text>
<rect x="163.15" y="190.95" width="113.7" height="41.7" fill="#ffffff" stroke="#8c0c12" stroke-width="1.75"/>
<rect x="369.9" y="190.95" width="113.65" height="41.7" fill="#ffffff" stroke="#8c0c12" stroke-width="1.75"/>
<rect x="257.9" y="302.05" width="113.4" height="41.9" fill="#ffffff" stroke="#8c0c12" stroke-width="1.75"/>
<text x="175.4" y="216.2" font-size="12.2" fill="#333333" textLength="87.6" lengthAdjust="spacingAndGlyphs">Object Attributes</text>
<text x="397.5" y="216.2" font-size="12.2" fill="#333333" textLength="58" lengthAdjust="spacingAndGlyphs">Comments</text>
<text x="281.1" y="327.3" font-size="12.2" fill="#333333" textLength="67.7" lengthAdjust="spacingAndGlyphs">Column Grid</text>
<rect x="0" y="1.3" width="652" height="0.8" fill="#fafafa" opacity="0.8"/>
<rect x="1.4" y="0" width="0.9" height="474" fill="#fafafa" opacity="0.55"/>
<rect x="649.6" y="1.3" width="0.8" height="14.7" fill="#fafafa" opacity="0.9"/>
<rect x="649.6" y="18" width="0.8" height="20" fill="#fafafa" opacity="0.9"/>
<rect x="649.6" y="173" width="0.8" height="299" fill="#fafafa" opacity="0.9"/>
<rect x="1.6" y="471.1" width="649" height="0.9" fill="#fafafa" opacity="0.8"/>
<rect x="0" y="0" width="652" height="1.3" fill="#7a7a7a"/>
<rect x="0" y="0" width="1.6" height="474" fill="#7a7a7a"/>
<rect x="650.3" y="0" width="1.7" height="474" fill="#7a7a7a"/>
<rect x="0" y="472" width="652" height="2" fill="#7a7a7a"/>
</svg>
</body>
</html>
